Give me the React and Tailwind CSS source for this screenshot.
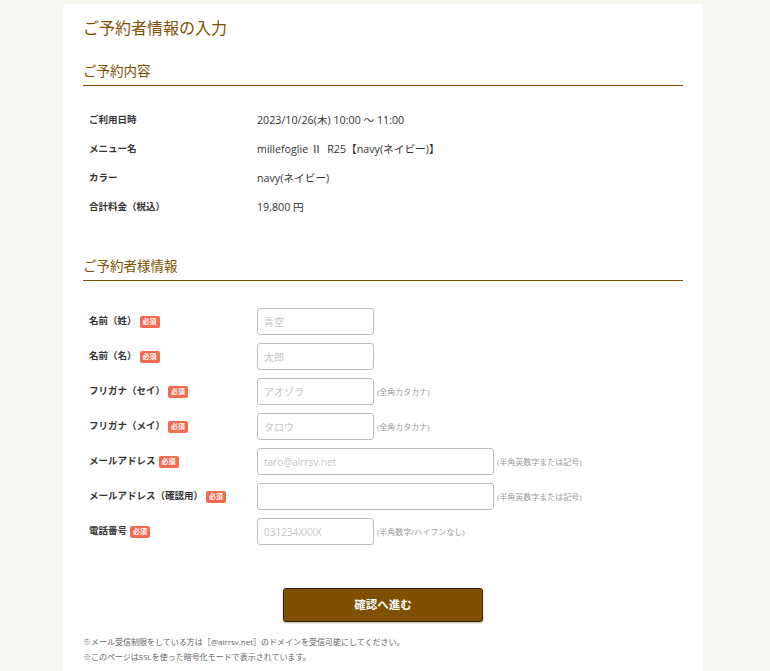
const font = { fontFamily: '"Open Sans", "Noto Sans CJK JP", sans-serif' };

const summary = [
  ['ご利用日時', '2023/10/26(木) 10:00 ～ 11:00'],
  ['メニュー名', 'millefoglie Ⅱ  R25【navy(ネイビー)】'],
  ['カラー', 'navy(ネイビー)'],
  ['合計料金（税込）', '19,800 円'],
];

const fields = [
  { label: '名前（姓）', placeholder: '青空', wide: false },
  { label: '名前（名）', placeholder: '太郎', wide: false },
  { label: 'フリガナ（セイ）', placeholder: 'アオゾラ', wide: false, note: '(全角カタカナ)' },
  { label: 'フリガナ（メイ）', placeholder: 'タロウ', wide: false, note: '(全角カタカナ)' },
  { label: 'メールアドレス', placeholder: 'taro@airrsv.net', wide: true, note: '(半角英数字または記号)' },
  { label: 'メールアドレス（確認用）', placeholder: '', wide: true, note: '(半角英数字または記号)' },
  { label: '電話番号', placeholder: '031234XXXX', wide: false, note: '(半角数字/ハイフンなし)' },
];

function SectionHeading({ children, className }) {
  return (
    <h2 className={`text-[13.5px] leading-[22px] text-[#7f5000] pb-[3px] border-b border-[#7f5000] ${className}`}>
      {children}
    </h2>
  );
}

export default function App() {
  return (
    <div className="min-h-screen bg-[#f7f5f0] pt-[4px]" style={font}>
      <div className="ml-[63px] w-[640px] min-h-[680px] bg-white rounded-t-[4px] px-5">
        <h1 className="pt-[10px] text-[16px] leading-[28px] text-[#7f5000]">ご予約者情報の入力</h1>

        <SectionHeading className="mt-[18px]">ご予約内容</SectionHeading>
        <div className="mt-[20px]">
          {summary.map(([k, v]) => (
            <div key={k} className="flex items-center h-[29px]">
              <div className="w-[174px] pl-[6px] text-[9.5px] font-bold text-[#333]">{k}</div>
              <div className="text-[10.7px] text-[#333] whitespace-pre">{v}</div>
            </div>
          ))}
        </div>

        <SectionHeading className="mt-[33px]">ご予約者様情報</SectionHeading>
        <div className="mt-[27px] flex flex-col gap-[8px]">
          {fields.map((f) => (
            <div key={f.label} className="flex items-center h-[27px]">
              <div className="w-[174px] pl-[6px] flex items-center">
                <span className="text-[9.5px] font-bold text-[#333]">{f.label}</span>
                <span className="ml-[3px] inline-flex items-center justify-center h-[12px] px-[3px] rounded-[2px] bg-[#f26a4f] text-white text-[7px] font-bold leading-none">
                  必須
                </span>
              </div>
              <input
                className={`${f.wide ? 'w-[237px]' : 'w-[117px]'} h-[27px] border border-[#bdbdbd] rounded-[3px] px-[6px] text-[10px] text-[#333] placeholder:text-[#c4c4c4] outline-none`}
                placeholder={f.placeholder}
              />
              {f.note && <span className="ml-[3px] text-[8px] text-[#999]">{f.note}</span>}
            </div>
          ))}
        </div>

        <button className="block mx-auto mt-[43px] w-[200px] h-[34px] bg-[#7f5000] border border-[#3a2400] rounded-[3px] shadow-[0_1px_2px_rgba(0,0,0,0.3)] text-white text-[11.5px] font-bold">
          確認へ進む
        </button>

        <div className="mt-[12px] text-[8px] leading-[15px] text-[#666]">
          <p>※メール受信制限をしている方は［@airrsv.net］のドメインを受信可能にしてください。</p>
          <p>※このページはSSLを使った暗号化モードで表示されています。</p>
        </div>
      </div>
    </div>
  );
}
